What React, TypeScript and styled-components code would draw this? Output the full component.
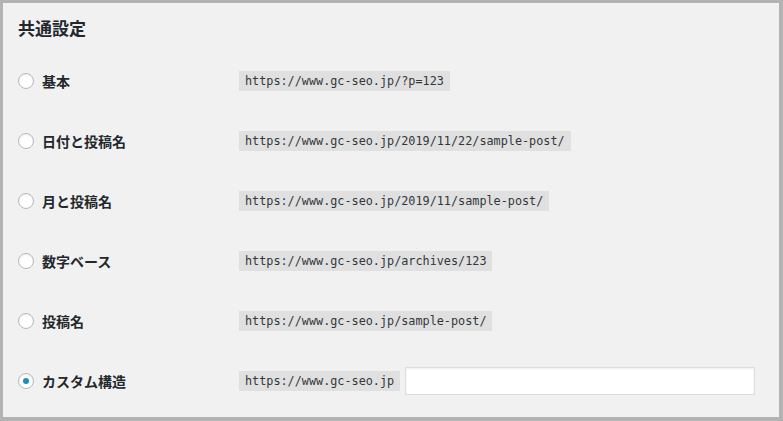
import styled, { createGlobalStyle } from 'styled-components';

const GlobalStyle = createGlobalStyle`
  html, body {
    margin: 0;
    padding: 0;
    background: #f1f1f1;
  }
  * {
    box-sizing: border-box;
  }
`;

const Frame = styled.div`
  width: 783px;
  height: 421px;
  border-style: solid;
  border-color: #b3b3b3;
  border-width: 3px 4px 4px 3px;
  background: #f1f1f1;
  padding: 12px 15px 0 15px;
  font-family: "Noto Sans CJK JP", "Noto Sans", sans-serif;
  color: #23282d;
`;

const Title = styled.h2`
  margin: 0;
  font-size: 17px;
  line-height: 25px;
  font-weight: 700;
  height: 36px;
`;

const Row = styled.label`
  display: grid;
  grid-template-columns: 221px 1fr;
  align-items: center;
  height: 60px;
`;

const Choice = styled.div`
  display: flex;
  align-items: center;
  gap: 8px;
  font-size: 14px;
  font-weight: 700;
`;

const Radio = styled.span<{ checked?: boolean }>`
  width: 16px;
  height: 16px;
  border-radius: 50%;
  border: 1px solid #b4b9be;
  background: #fff;
  box-shadow: inset 0 1px 2px rgba(0, 0, 0, 0.07);
  display: flex;
  align-items: center;
  justify-content: center;
  flex-shrink: 0;

  &::after {
    content: '';
    width: 6px;
    height: 6px;
    border-radius: 50%;
    background: ${(p) => (p.checked ? '#1e8cbe' : 'transparent')};
  }
`;

const Sample = styled.div`
  display: flex;
  align-items: center;
  gap: 5px;
`;

const Code = styled.code`
  font-family: "DejaVu Sans Mono", "Liberation Mono", monospace;
  font-size: 11.8px;
  line-height: 14px;
  padding: 3px 6px;
  background: #e0e0e0;
  color: #32373c;
`;

const Field = styled.input`
  width: 350px;
  height: 28px;
  border: 1px solid #ddd;
  background: #fff;
  box-shadow: inset 0 1px 2px rgba(0, 0, 0, 0.07);
  outline: none;
  padding: 0 8px;
  font-size: 14px;
`;

const base = 'https://www.gc-seo.jp';

const options = [
  { label: '基本', sample: base + '/?p=123' },
  { label: '日付と投稿名', sample: base + '/2019/11/22/sample-post/' },
  { label: '月と投稿名', sample: base + '/2019/11/sample-post/' },
  { label: '数字ベース', sample: base + '/archives/123' },
  { label: '投稿名', sample: base + '/sample-post/' },
];

export default function App() {
  return (
    <>
      <GlobalStyle />
      <Frame>
        <Title>共通設定</Title>
        {options.map((o) => (
          <Row key={o.label}>
            <Choice>
              <Radio />
              {o.label}
            </Choice>
            <Sample>
              <Code>{o.sample}</Code>
            </Sample>
          </Row>
        ))}
        <Row>
          <Choice>
            <Radio checked />
            カスタム構造
          </Choice>
          <Sample>
            <Code>{base}</Code>
            <Field defaultValue="" />
          </Sample>
        </Row>
      </Frame>
    </>
  );
}
